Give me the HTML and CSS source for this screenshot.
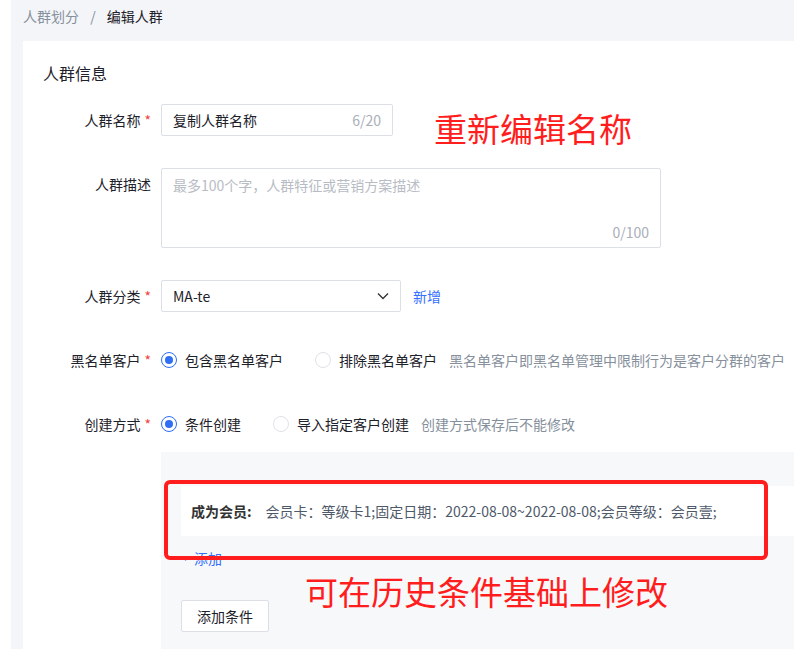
FILE: index.html
```html
<!DOCTYPE html>
<html lang="zh-CN">
<head>
  <meta charset="UTF-8" />
  <meta name="viewport" content="width=device-width, initial-scale=1.0"/>
  <title>编辑人群</title>
  <link rel="stylesheet" href="styles.css">
</head>
<body>
  <div class="page">
    <div class="breadcrumb">
      <span class="crumb">人群划分</span>
      <span class="sep">/</span>
      <span class="crumb current">编辑人群</span>
    </div>

    <div class="card">
      <div class="card-title">人群信息</div>

      <div class="form-item">
        <div class="form-label">人群名称<span class="req">*</span></div>
        <div class="form-control">
          <div class="input name-input">
            <span class="input-text">复制人群名称</span>
            <span class="count">6/20</span>
          </div>
        </div>
        <div class="note note-name">重新编辑名称</div>
      </div>

      <div class="form-item">
        <div class="form-label">人群描述</div>
        <div class="form-control">
          <div class="textarea">
            <span class="placeholder">最多100个字，人群特征或营销方案描述</span>
            <span class="count">0/100</span>
          </div>
        </div>
      </div>

      <div class="form-item">
        <div class="form-label">人群分类<span class="req">*</span></div>
        <div class="form-control row">
          <div class="input select">
            <span class="input-text">MA-te</span>
            <svg class="chevron" width="14" height="14" viewBox="0 0 14 14">
              <path d="M2 4.5 L7 9.5 L12 4.5" fill="none" stroke="#333" stroke-width="1.3"/>
            </svg>
          </div>
          <a class="link">新增</a>
        </div>
      </div>

      <div class="form-item">
        <div class="form-label">黑名单客户<span class="req">*</span></div>
        <div class="form-control row">
          <label class="radio checked"><span class="dot"></span>包含黑名单客户</label>
          <label class="radio"><span class="dot"></span>排除黑名单客户</label>
          <span class="help">黑名单客户即黑名单管理中限制行为是客户分群的客户</span>
        </div>
      </div>

      <div class="form-item tight">
        <div class="form-label">创建方式<span class="req">*</span></div>
        <div class="form-control row">
          <label class="radio checked"><span class="dot"></span>条件创建</label>
          <label class="radio"><span class="dot"></span>导入指定客户创建</label>
          <span class="help">创建方式保存后不能修改</span>
        </div>
      </div>

      <div class="cond-wrap">
        <div class="cond-box">
          <div class="cond-row">
            <span class="cond-name">成为会员:</span>
            <span class="cond-value">会员卡：等级卡1;固定日期：2022-08-08~2022-08-08;会员等级：会员壹;</span>
          </div>
          <a class="link add-link"><span class="plus">+</span>添加</a>
          <button class="btn">添加条件</button>
          <div class="mark-box"></div>
          <div class="note note-cond">可在历史条件基础上修改</div>
        </div>
      </div>
    </div>
  </div>
</body>
</html>
```

FILE: styles.css
```css
html, body {
  margin: 0;
  height: 100%;
}
body {
  background: #fff;
  font-family: "Noto Sans CJK SC", "Noto Sans", sans-serif;
  font-size: 14px;
  color: #333;
  overflow: hidden;
}
.page {
  margin-left: 11px;
  background: #f4f5f8;
  min-height: 100%;
  padding-left: 12px;
}
.breadcrumb {
  height: 41px;
  line-height: 32px;
  font-size: 14px;
}
.crumb {
  color: #86909c;
}
.crumb.current {
  color: #1d2129;
}
.sep {
  color: #86909c;
  margin: 0 8px;
}
.card {
  background: #fff;
  padding: 20px 0 0 20px;
  min-height: 600px;
}
.card-title {
  font-size: 16px;
  line-height: 24px;
  color: #1d2129;
  margin-bottom: 19px;
}
.form-item {
  display: flex;
  align-items: flex-start;
  margin-bottom: 32px;
  position: relative;
}
.form-item.tight {
  margin-bottom: 12px;
}
.form-label {
  width: 108px;
  padding-right: 10px;
  text-align: right;
  line-height: 32px;
  color: #1d2129;
  white-space: nowrap;
}
.req {
  color: #f53f3f;
  margin-left: 4px;
}
.form-control {
  flex: 1;
}
.form-control.row {
  display: flex;
  align-items: center;
  height: 32px;
  white-space: nowrap;
}
.input {
  box-sizing: border-box;
  height: 32px;
  border: 1px solid #dcdfe6;
  border-radius: 2px;
  display: flex;
  align-items: center;
  padding: 0 11px;
}
.name-input {
  width: 232px;
}
.input-text {
  flex: 1;
  color: #1d2129;
}
.count {
  color: #a9aeb8;
}
.textarea {
  box-sizing: border-box;
  width: 500px;
  height: 80px;
  border: 1px solid #dcdfe6;
  border-radius: 2px;
  padding: 6px 11px;
  display: flex;
  flex-direction: column;
  justify-content: space-between;
}
.placeholder {
  color: #b8bcc4;
}
.textarea .count {
  align-self: flex-end;
  line-height: 18px;
}
.select {
  width: 240px;
}
.chevron {
  margin-right: -1px;
}
.link {
  color: #3370ff;
  cursor: pointer;
}
.select + .link {
  margin-left: 12px;
}
.radio {
  display: flex;
  align-items: center;
  color: #1d2129;
  margin-right: 32px;
}
.radio .dot {
  box-sizing: border-box;
  width: 16px;
  height: 16px;
  border: 1px solid #e0e2e7;
  border-radius: 50%;
  margin-right: 8px;
  display: flex;
  align-items: center;
  justify-content: center;
}
.radio.checked .dot {
  border-color: #2f6ff5;
}
.radio.checked .dot::after {
  content: "";
  width: 8px;
  height: 8px;
  border-radius: 50%;
  background: #2f6ff5;
}
.radio + .radio {
  margin-right: 12px;
}
.help {
  color: #86909c;
}
.cond-wrap {
  padding-left: 118px;
}
.cond-box {
  position: relative;
  background: #f7f8fa;
  padding: 34px 0 40px 20px;
}
.cond-row {
  background: #fff;
  height: 50px;
  display: flex;
  align-items: center;
  padding-left: 10px;
  font-size: 14px;
  white-space: nowrap;
}
.cond-name {
  font-weight: bold;
  color: #333;
  margin-right: 14px;
}
.cond-value {
  color: #4e5969;
}
.add-link {
  display: block;
  margin-top: 13px;
  line-height: 18px;
  font-size: 14px;
}
.plus {
  font-size: 9px;
  margin: 0 6px 0 2px;
  vertical-align: 2px;
}
.btn {
  display: block;
  margin-top: 32px;
  height: 32px;
  width: 88px;
  background: #fff;
  border: 1px solid #dcdfe6;
  border-radius: 2px;
  font-family: inherit;
  font-size: 14px;
  color: #1d2129;
}
.mark-box {
  position: absolute;
  left: 3px;
  top: 28px;
  width: 596px;
  height: 72px;
  border: 4px solid #ff1d1d;
  border-radius: 6px;
}
.note {
  position: absolute;
  color: #ff1d1d;
  font-size: 33px;
  line-height: 40px;
  white-space: nowrap;
}
.note-name {
  left: 391px;
  top: 4px;
}
.note-cond {
  left: 144px;
  top: 119px;
}
```
